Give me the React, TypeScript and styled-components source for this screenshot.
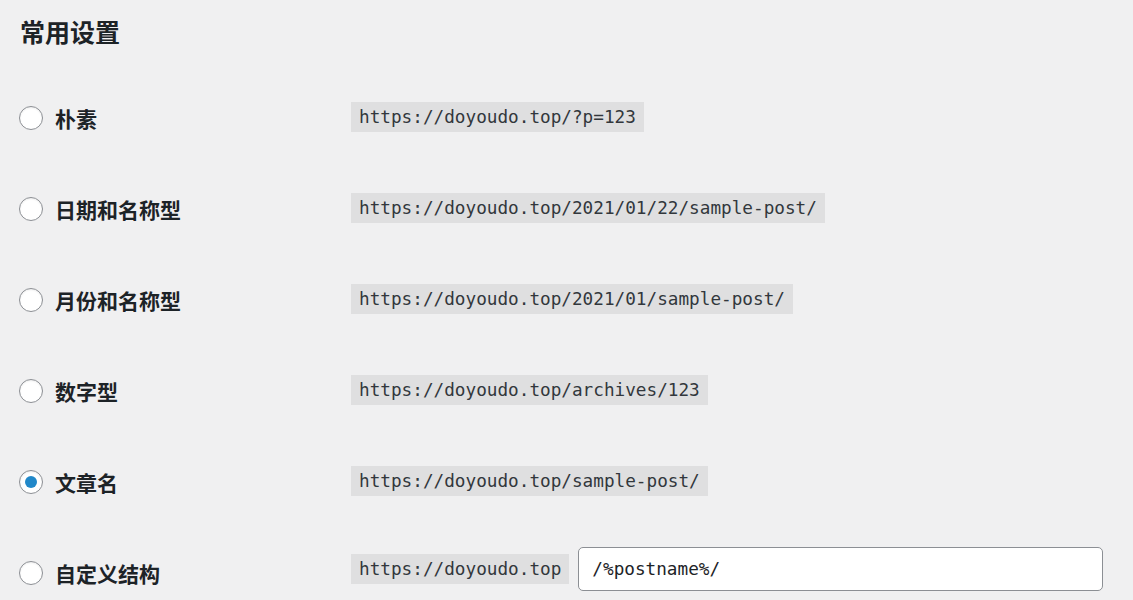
import styled, { createGlobalStyle } from 'styled-components';

const GlobalStyle = createGlobalStyle`
  html, body {
    margin: 0;
    padding: 0;
    background: #f0f0f1;
  }
  body {
    font-family: 'Noto Sans CJK SC', 'Noto Sans', sans-serif;
    color: #1d2327;
  }
`;

const options = [
  { label: '朴素', url: 'https://doyoudo.top/?p=123' },
  { label: '日期和名称型', url: 'https://doyoudo.top/2021/01/22/sample-post/' },
  { label: '月份和名称型', url: 'https://doyoudo.top/2021/01/sample-post/' },
  { label: '数字型', url: 'https://doyoudo.top/archives/123' },
  { label: '文章名', url: 'https://doyoudo.top/sample-post/', checked: true },
];

export default function App() {
  return (
    <>
      <GlobalStyle />
      <Page>
        <Header>
          <Title>常用设置</Title>
        </Header>
        <List>
          {options.map((o) => (
            <Row key={o.label}>
              <LabelCell>
                <Radio $checked={!!o.checked} />
                <Label>{o.label}</Label>
              </LabelCell>
              <ValueCell>
                <Code>{o.url}</Code>
              </ValueCell>
            </Row>
          ))}
          <Row>
            <LabelCell>
              <Radio $checked={false} />
              <Label>自定义结构</Label>
            </LabelCell>
            <ValueCell $raised>
              <Code>https://doyoudo.top</Code>
              <Input defaultValue="/%postname%/" />
            </ValueCell>
          </Row>
        </List>
      </Page>
    </>
  );
}

const Page = styled.div`
  padding: 0 30px 0 19px;
  width: 1133px;
  box-sizing: border-box;
`;

const Header = styled.div`
  height: 72px;
  padding-top: 15px;
  box-sizing: border-box;
`;

const Title = styled.h2`
  margin: 0 0 0 1px;
  font-size: 25px;
  line-height: 32px;
  font-weight: 700;
  color: #1d2327;
`;

const List = styled.div`
  display: flex;
  flex-direction: column;
`;

const Row = styled.div`
  display: flex;
  align-items: center;
  height: 91px;
`;

const LabelCell = styled.label`
  display: flex;
  align-items: center;
  gap: 12px;
  width: 332px;
  flex-shrink: 0;
`;

const Radio = styled.span<{ $checked: boolean }>`
  position: relative;
  width: 24px;
  height: 24px;
  box-sizing: border-box;
  border: 1px solid #8c8f94;
  border-radius: 50%;
  background: #fff;
  box-shadow: inset 0 1px 2px rgba(0, 0, 0, 0.08);
  flex-shrink: 0;

  &::after {
    content: '';
    display: ${({ $checked }) => ($checked ? 'block' : 'none')};
    position: absolute;
    top: 50%;
    left: 50%;
    width: 12px;
    height: 12px;
    transform: translate(-50%, -50%);
    border-radius: 50%;
    background: #2188c9;
  }
`;

const Label = styled.span`
  font-size: 21px;
  font-weight: 700;
  line-height: 28px;
  color: #1d2327;
`;

const ValueCell = styled.div<{ $raised?: boolean }>`
  display: flex;
  align-items: center;
  gap: 9px;
  flex: 1;
  margin-top: -2px;
  margin-bottom: ${({ $raised }) => ($raised ? '6px' : '0')};
`;

const Code = styled.code`
  display: inline-block;
  height: 30px;
  line-height: 30px;
  padding: 0 8px;
  background: rgba(0, 0, 0, 0.07);
  font-family: 'DejaVu Sans Mono', 'Liberation Mono', monospace;
  font-size: 17.7px;
  color: #32373c;
  white-space: nowrap;
`;

const Input = styled.input`
  flex: 1;
  height: 44px;
  box-sizing: border-box;
  padding: 0 13px;
  border: 1px solid #8c8f94;
  border-radius: 5px;
  background: #fff;
  font-family: 'DejaVu Sans Mono', 'Liberation Mono', monospace;
  font-size: 17.7px;
  color: #1d2327;
  outline: none;
`;
